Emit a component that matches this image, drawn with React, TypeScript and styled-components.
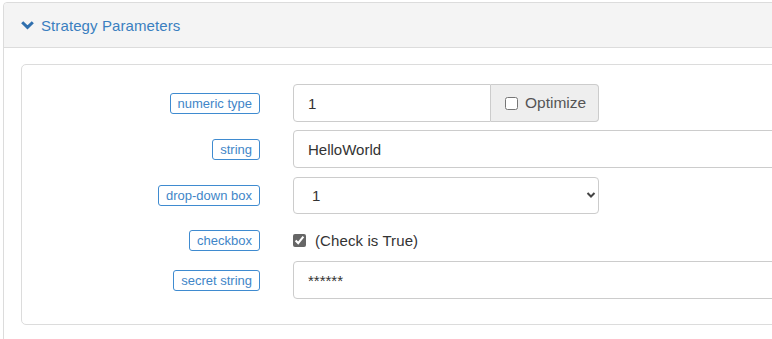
import React from "react";
import styled, { createGlobalStyle } from "styled-components";

const Global = createGlobalStyle`
  html, body { margin: 0; padding: 0; background: #fff; overflow: hidden; }
  body { font-family: "Liberation Sans", Arial, sans-serif; color: #333; }
  * { box-sizing: border-box; }
`;

const Page = styled.div`
  padding: 2px 0 0 3px;
  height: 100vh;
  overflow: hidden;
`;

const Panel = styled.section`
  width: 1100px;
  border: 1px solid #dcdcdc;
  border-radius: 4px;
  background: #fff;
  min-height: 360px;
`;

const PanelHeader = styled.header`
  height: 45px;
  background: #f4f4f4;
  border-bottom: 1px solid #dcdcdc;
  border-radius: 4px 4px 0 0;
  display: flex;
  align-items: center;
  gap: 7px;
  padding: 0 0 0 17px;
  color: #3a7fc0;
  font-size: 15px;
  letter-spacing: 0.1px;
`;

const PanelBody = styled.div`
  padding: 16px 0 0 17px;
`;

const Well = styled.div`
  border: 1px solid #dcdcdc;
  border-radius: 5px;
  padding: 19px 0 25px 0;
  display: flex;
  flex-direction: column;
  gap: 8px;
`;

const Row = styled.div<{ $check?: boolean }>`
  display: grid;
  grid-template-columns: 238px 1fr;
  column-gap: 33px;
  align-items: center;
  min-height: ${(p) => (p.$check ? "31px" : "38px")};
  padding-top: ${(p) => (p.$check ? "6px" : "0")};
`;

const LabelCell = styled.div`
  display: flex;
  justify-content: flex-end;
`;

const Tag = styled.span`
  display: inline-block;
  border: 1px solid #3f8bd0;
  border-radius: 3px;
  color: #3f86c8;
  font-size: 13px;
  line-height: 17px;
  padding: 1px 7px 1px 7px;
`;

const Input = styled.input<{ $grouped?: boolean }>`
  height: 38px;
  width: 100%;
  border: 1px solid #ccc;
  border-radius: ${(p) => (p.$grouped ? "4px 0 0 4px" : "4px")};
  padding: 0 14px;
  font-family: "Liberation Sans", Arial, sans-serif;
  font-size: 15px;
  color: #333;
  background: #fff;
  outline: none;
`;

const Group = styled.div`
  display: flex;
  width: 306px;
`;

const Addon = styled.label`
  display: flex;
  align-items: center;
  gap: 7px;
  height: 38px;
  width: 108px;
  flex: none;
  background: #eee;
  border: 1px solid #ccc;
  border-left: none;
  border-radius: 0 4px 4px 0;
  padding: 0 0 0 14px;
  font-size: 15.5px;
  color: #555;
`;

const Box = styled.input`
  margin: 0;
  width: 13px;
  height: 13px;
  accent-color: #666;
`;

const SelectWrap = styled.div`
  position: relative;
  width: 306px;
`;

const Select = styled.select`
  appearance: none;
  width: 100%;
  height: 37px;
  border: 1px solid #ccc;
  border-radius: 4px;
  padding: 0 18px;
  font-family: "Liberation Sans", Arial, sans-serif;
  font-size: 15px;
  color: #333;
  background: #fff;
  outline: none;
`;

const Caret = styled.svg`
  position: absolute;
  right: 3px;
  top: 14px;
  pointer-events: none;
`;

const CheckLine = styled.label`
  display: flex;
  align-items: center;
  gap: 9px;
  font-size: 15px;
  letter-spacing: 0.1px;
  color: #333;
`;

const Wide = styled.div`
  width: 600px;
`;

export default function App() {
  return (
    <>
      <Global />
      <Page>
        <Panel>
          <PanelHeader>
            <svg width="13" height="10" viewBox="0 0 13 10">
              <path d="M1.2 2.2 L6.5 7.4 L11.8 2.2" fill="none" stroke="#2f6fae" strokeWidth="3" strokeLinecap="butt" />
            </svg>
            <span>Strategy Parameters</span>
          </PanelHeader>
          <PanelBody>
            <Well>
              <Row>
                <LabelCell><Tag>numeric type</Tag></LabelCell>
                <Group>
                  <Input $grouped defaultValue="1" />
                  <Addon>
                    <Box type="checkbox" />
                    Optimize
                  </Addon>
                </Group>
              </Row>
              <Row>
                <LabelCell><Tag>string</Tag></LabelCell>
                <Wide><Input defaultValue="HelloWorld" /></Wide>
              </Row>
              <Row>
                <LabelCell><Tag>drop-down box</Tag></LabelCell>
                <SelectWrap>
                  <Select defaultValue="1">
                    <option value="1">1</option>
                    <option value="2">2</option>
                  </Select>
                  <Caret width="10" height="8" viewBox="0 0 10 8">
                    <path d="M1.5 2 L5 5.5 L8.5 2" fill="none" stroke="#444" strokeWidth="2" />
                  </Caret>
                </SelectWrap>
              </Row>
              <Row $check>
                <LabelCell><Tag>checkbox</Tag></LabelCell>
                <CheckLine>
                  <Box type="checkbox" defaultChecked />
                  (Check is True)
                </CheckLine>
              </Row>
              <Row>
                <LabelCell><Tag>secret string</Tag></LabelCell>
                <Wide><Input type="text" defaultValue="******" /></Wide>
              </Row>
            </Well>
          </PanelBody>
        </Panel>
      </Page>
    </>
  );
}
